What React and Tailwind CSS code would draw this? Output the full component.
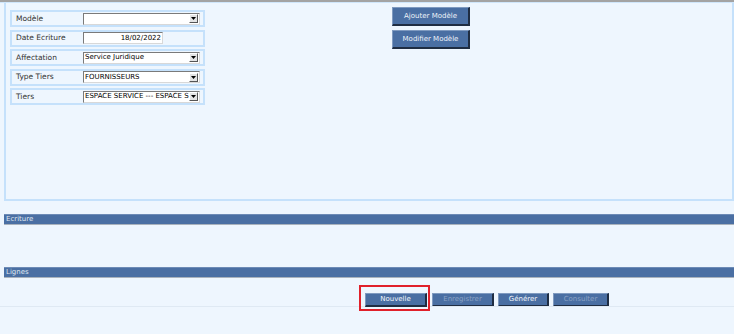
import React from 'react'

const font = { fontFamily: '"DejaVu Sans", Verdana, sans-serif' }

function Arrow() {
  return (
    <span className="w-[9px] h-[9px] mr-[1px] bg-[#e4e4e4] border border-t-white border-l-white border-r-[#555] border-b-[#555] flex items-center justify-center">
      <svg width="5" height="3" viewBox="0 0 5 3"><path d="M0 0h5L2.5 3z" fill="#000" /></svg>
    </span>
  )
}

function Field({ label, value, select = true, narrow = false, align = 'left' }) {
  return (
    <div className="h-[17px] w-[195px] border-2 border-[#c5e1fb] flex items-center">
      <span className="w-[71px] pl-[4px] text-[7.5px] text-[#333]">{label}</span>
      <div
        className={`h-[12px] bg-white border border-t-[#7a7a7a] border-l-[#7a7a7a] border-r-[#d8d8d8] border-b-[#d8d8d8] flex items-center ${narrow ? 'w-[80px]' : 'w-[117px]'}`}
      >
        <span className={`flex-1 overflow-hidden whitespace-nowrap text-[7px] text-black pl-[1px] ${align === 'right' ? 'text-right pr-[1px]' : ''}`}>
          {value}
        </span>
        {select && <Arrow />}
      </div>
    </div>
  )
}

function Btn({ children, w, disabled = false }) {
  return (
    <div
      className={`h-[14px] ${w} bg-[#4a6fa3] border border-t-[#7f9ac0] border-l-[#7f9ac0] border-r-[#1f2d42] border-b-[#1f2d42] border-r-2 border-b-2 flex items-center justify-center text-[7px] ${disabled ? 'text-[#8aa2c4]' : 'text-[#f4f7fb]'}`}
    >
      {children}
    </div>
  )
}

function Bar({ children }) {
  return (
    <div className="ml-[4px] h-[11px] bg-[#4a6fa3] border-t border-t-[#6d8bb6] border-b border-b-[#a9b2bc] flex items-center pl-[2px] text-[7px] text-[#dfe7f1]">
      {children}
    </div>
  )
}

export default function App() {
  return (
    <div className="w-[734px] h-[334px] bg-[#eef6fe] overflow-hidden flex flex-col" style={font}>
      <div className="h-[2px] bg-[#a3a3a3]" />
      <div className="h-[1px] bg-[#cfe6fb]" />

      {/* Top panel */}
      <div className="ml-[4px] h-[198px] border-2 border-t-0 border-[#c5e1fb] flex">
        <div className="pl-[4px] pt-[7px] flex flex-col gap-[2.5px]">
          <Field label="Modèle" value="" />
          <Field label="Date Ecriture" value="18/02/2022" select={false} narrow align="right" />
          <Field label="Affectation" value="Service Juridique" />
          <Field label="Type Tiers" value="FOURNISSEURS" />
          <Field label="Tiers" value="ESPACE SERVICE --- ESPACE S" />
        </div>
        <div className="ml-[187px] pt-[4px] flex flex-col gap-[4px]">
          <div className="h-[19px] w-[78px] bg-[#4a6fa3] border border-t-[#7f9ac0] border-l-[#7f9ac0] border-r-2 border-b-2 border-r-[#1f2d42] border-b-[#1f2d42] flex items-center justify-center text-[7px] text-[#eef3fa]">
            Ajouter Modèle
          </div>
          <div className="h-[19px] w-[78px] bg-[#4a6fa3] border border-t-[#7f9ac0] border-l-[#7f9ac0] border-r-2 border-b-2 border-r-[#1f2d42] border-b-[#1f2d42] flex items-center justify-center text-[7px] text-[#eef3fa]">
            Modifier Modèle
          </div>
        </div>
      </div>

      <div className="h-[13px] shrink-0" />
      <Bar>Ecriture</Bar>
      <div className="h-[42px] shrink-0" />
      <Bar>Lignes</Bar>
      <div className="h-[15px] shrink-0" />

      {/* Bottom actions */}
      <div className="h-[13px] shrink-0 flex items-start">
        <div className="relative ml-[365px]">
          <Btn w="w-[62px]">Nouvelle</Btn>
          <span className="absolute -left-[6px] -top-[8px] -right-[3px] -bottom-[4px] border-2 border-[#e0202a] pointer-events-none" />
        </div>
        <div className="ml-[5px] flex gap-[4px]">
          <Btn w="w-[62px]" disabled>Enregistrer</Btn>
          <Btn w="w-[51px]">Générer</Btn>
          <Btn w="w-[56px]" disabled>Consulter</Btn>
        </div>
      </div>
      <div className="h-[1px] shrink-0 bg-[#dfe9f3]" />
    </div>
  )
}
